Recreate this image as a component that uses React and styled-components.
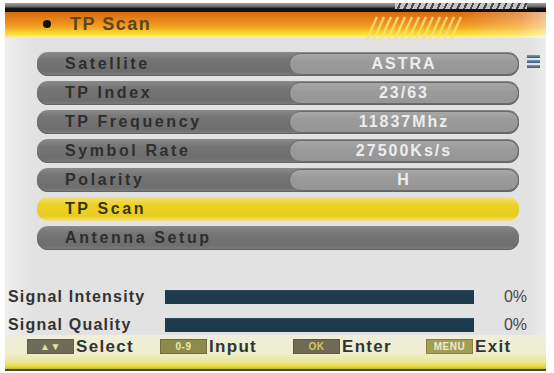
import React from "react";
import styled, { createGlobalStyle } from "styled-components";

const Global = createGlobalStyle`
  html, body { margin: 0; padding: 0; background: #ffffff; }
  body { font-family: "Liberation Sans", Arial, sans-serif; }
`;

const Screen = styled.div`
  width: 554px;
  height: 373px;
  display: flex;
  flex-direction: column;
  padding: 3px 8px 2px 5px;
  box-sizing: border-box;
  background: #ffffff;
  overflow: hidden;
`;

const Header = styled.div`
  position: relative;
  height: 35px;
  display: flex;
  flex-direction: column;
  flex-shrink: 0;
`;

const TopStrip = styled.div`
  height: 9px;
  background: linear-gradient(#a0a0a0 0%, #6a6a6a 40%, #151515 60%, #0a0a0a 100%);
  display: flex;
  justify-content: flex-end;
  padding-right: 19px;
`;

const DashBand = styled.div`
  width: 132px;
  height: 6px;
  background: repeating-linear-gradient(
    115deg,
    #c4c4c4 0px,
    #c4c4c4 4px,
    #4a4a4a 4px,
    #4a4a4a 6px
  );
`;

const TitleBar = styled.div`
  position: relative;
  flex: 1;
  display: flex;
  align-items: center;
  padding-left: 38px;
  gap: 19px;
  background:
    linear-gradient(90deg, rgba(255,255,255,0) 0%, rgba(255,255,255,0) 84%, rgba(255,236,210,0.3) 95%, rgba(255,255,255,0.55) 100%),
    linear-gradient(#d86a12 0%, #ec8a1c 38%, #f4a622 60%, #f8d028 76%, #f8e43c 88%, #f2eeb0 97%, #ecebd8 100%);
`;

const Bullet = styled.span`
  width: 8px;
  height: 8px;
  border-radius: 50%;
  background: #151008;
  margin-top: -2px;
`;

const Title = styled.span`
  font-family: "Liberation Sans", Arial, sans-serif;
  font-weight: bold;
  font-size: 18px;
  letter-spacing: 1.5px;
  color: #5a4816;
  margin-top: -2px;
`;

const Stripes = styled.svg`
  position: absolute;
  left: 354px;
  top: 6px;
`;

const Body = styled.div`
  flex: 1;
  display: flex;
  flex-direction: column;
  background: linear-gradient(90deg, #eeeeee 0px, #e2e2e2 30px, #e2e2e2 97%, #ececec 100%);
`;

const MenuWrap = styled.div`
  display: flex;
  align-items: flex-start;
  padding: 14px 0 0 32px;
  gap: 8px;
`;

const Menu = styled.div`
  width: 482px;
  display: flex;
  flex-direction: column;
  gap: 5px;
`;

const Row = styled.div`
  height: 24px;
  border-radius: 11px;
  display: flex;
  align-items: center;
  background: ${(p) =>
    p.$active
      ? "linear-gradient(#f2e27a 0%, #ecd22a 30%, #e8cc1e 80%, #efe08a 100%)"
      : "linear-gradient(#8a8a8a 0%, #757575 30%, #6e6e6e 80%, #7e7e7e 100%)"};
  box-shadow: ${(p) => (p.$active ? "none" : "inset 0 -1px 0 #646464")};
`;

const Label = styled.span`
  flex: 1;
  padding-left: 28px;
  font-weight: bold;
  font-size: 16px;
  letter-spacing: 2.6px;
  color: ${(p) => (p.$active ? "#3a3510" : "#2e2e2e")};
  white-space: nowrap;
`;

const Value = styled.span`
  width: 230px;
  height: 22px;
  box-sizing: border-box;
  border-radius: 11px;
  border: 1px solid #6a6a6a;
  background: linear-gradient(#a8a8a8 0%, #9a9a9a 40%, #969696 100%);
  display: flex;
  align-items: center;
  justify-content: center;
  font-weight: bold;
  font-size: 16px;
  letter-spacing: 2px;
  color: #ededed;
`;

const ListIcon = styled.div`
  margin-top: 3px;
  display: flex;
  flex-direction: column;
  gap: 2px;
`;

const ListBar = styled.span`
  width: 13px;
  height: 3px;
  background: linear-gradient(#7b99b5, #35587a);
`;

const Signals = styled.div`
  margin-top: 38px;
  display: flex;
  flex-direction: column;
  gap: 12px;
  padding-left: 3px;
`;

const SignalRow = styled.div`
  display: grid;
  grid-template-columns: 157px 309px 1fr;
  align-items: center;
  height: 16px;
`;

const SignalLabel = styled.span`
  font-weight: bold;
  font-size: 16px;
  letter-spacing: 1.2px;
  color: #333333;
  white-space: nowrap;
`;

const Bar = styled.div`
  height: 14px;
  background: #1e3b4c;
  box-shadow: inset 0 1px 0 #2b4a5c;
`;

const Percent = styled.span`
  text-align: right;
  padding-right: 19px;
  font-size: 16px;
  color: #484848;
`;

const Footer = styled.div`
  height: 36px;
  box-sizing: border-box;
  flex-shrink: 0;
  display: grid;
  grid-template-columns: repeat(4, 133px);
  padding: 4px 0 0 22px;
  background: linear-gradient(#eeeedd 0%, #eeeecc 55%, #ece69a 78%, #e6da40 92%, #c8b830 100%);
  border-bottom: 2px solid #4a4a38;
`;

const FooterItem = styled.div`
  display: flex;
  align-items: center;
  height: 15px;
`;

const Key = styled.span`
  width: 47px;
  height: 15px;
  box-sizing: border-box;
  display: flex;
  align-items: center;
  justify-content: center;
  background: ${(p) => p.$bg};
  color: ${(p) => p.$fg};
  font-size: 10px;
  font-weight: bold;
  letter-spacing: 0.5px;
  border: 1px solid ${(p) => p.$edge};
`;

const KeyText = styled.span`
  margin-left: 2px;
  font-weight: bold;
  font-size: 17px;
  letter-spacing: 1.3px;
  color: #333333;
`;

const rows = [
  { label: "Satellite", value: "ASTRA" },
  { label: "TP Index", value: "23/63" },
  { label: "TP Frequency", value: "11837Mhz" },
  { label: "Symbol Rate", value: "27500Ks/s" },
  { label: "Polarity", value: "H" },
  { label: "TP Scan", active: true },
  { label: "Antenna Setup" },
];

const keys = [
  { key: "▲▼", text: "Select", bg: "#6c6c58", fg: "#e4e49a", edge: "#5e5e4a" },
  { key: "0-9", text: "Input", bg: "#8c8a4c", fg: "#eceaa8", edge: "#6e6c40" },
  { key: "OK", text: "Enter", bg: "#6e6a56", fg: "#d8c860", edge: "#5c584a" },
  { key: "MENU", text: "Exit", bg: "#a29e52", fg: "#ecead0", edge: "#86823e" },
];

function StripeArt() {
  const lines = [];
  for (let i = 0; i < 13; i++) {
    const x = 8 + i * 7;
    lines.push(
      <line key={i} x1={x} y1={30} x2={x + 10} y2={8} stroke="#f8e27a" strokeWidth="2.4" strokeOpacity="0.85" />
    );
  }
  return (
    <Stripes width="110" height="32" viewBox="0 0 110 32">
      {lines}
    </Stripes>
  );
}

export default function App() {
  return (
    <>
      <Global />
      <Screen>
        <Header>
          <TopStrip>
            <DashBand />
          </TopStrip>
          <TitleBar>
            <Bullet />
            <Title>TP Scan</Title>
          </TitleBar>
          <StripeArt />
        </Header>
        <Body>
          <MenuWrap>
            <Menu>
              {rows.map((r) => (
                <Row key={r.label} $active={r.active}>
                  <Label $active={r.active}>{r.label}</Label>
                  {r.value && <Value>{r.value}</Value>}
                </Row>
              ))}
            </Menu>
            <ListIcon>
              <ListBar />
              <ListBar />
              <ListBar />
            </ListIcon>
          </MenuWrap>
          <Signals>
            <SignalRow>
              <SignalLabel>Signal Intensity</SignalLabel>
              <Bar />
              <Percent>0%</Percent>
            </SignalRow>
            <SignalRow>
              <SignalLabel>Signal Quality</SignalLabel>
              <Bar />
              <Percent>0%</Percent>
            </SignalRow>
          </Signals>
        </Body>
        <Footer>
          {keys.map((k) => (
            <FooterItem key={k.text}>
              <Key $bg={k.bg} $fg={k.fg} $edge={k.edge}>{k.key}</Key>
              <KeyText>{k.text}</KeyText>
            </FooterItem>
          ))}
        </Footer>
      </Screen>
    </>
  );
}
